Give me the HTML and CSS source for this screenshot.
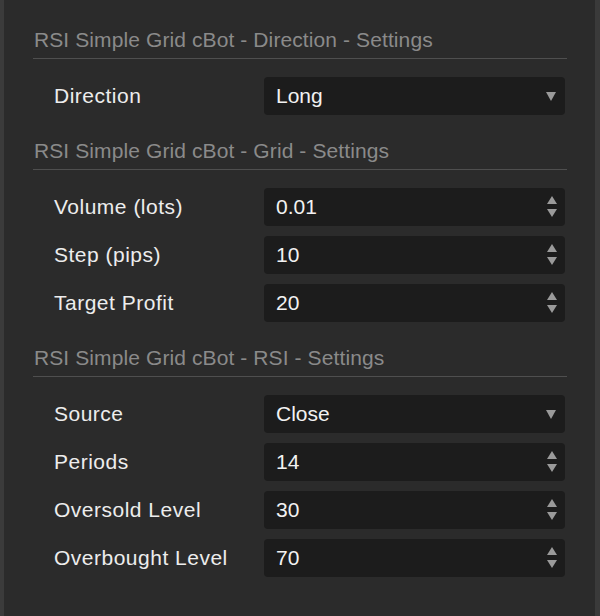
FILE: index.html
```html
<!DOCTYPE html>
<html lang="en">
<head>
    <meta charset="UTF-8">
    <meta name="viewport" content="width=device-width, initial-scale=1.0">
    <title>RSI Simple Grid cBot - Settings</title>
    <link rel="stylesheet" href="styles.css">
</head>
<body>
    <div class="panel">
        <div class="section">
            <div class="section-title">RSI Simple Grid cBot - Direction - Settings</div>
            <div class="rows">
                <div class="row">
                    <span class="label">Direction</span>
                    <div class="field">
                        <span class="value">Long</span>
                        <svg class="drop" width="10" height="9" viewBox="0 0 10 9"><path d="M0 0H10L5 9Z"/></svg>
                    </div>
                </div>
            </div>
        </div>

        <div class="section">
            <div class="section-title">RSI Simple Grid cBot - Grid - Settings</div>
            <div class="rows">
                <div class="row">
                    <span class="label">Volume (lots)</span>
                    <div class="field">
                        <span class="value">0.01</span>
                        <svg class="spin" width="10" height="22" viewBox="0 0 10 22"><path d="M5 0L10 8H0Z"/><path d="M0 13H10L5 21Z"/></svg>
                    </div>
                </div>
                <div class="row">
                    <span class="label">Step (pips)</span>
                    <div class="field">
                        <span class="value">10</span>
                        <svg class="spin" width="10" height="22" viewBox="0 0 10 22"><path d="M5 0L10 8H0Z"/><path d="M0 13H10L5 21Z"/></svg>
                    </div>
                </div>
                <div class="row">
                    <span class="label">Target Profit</span>
                    <div class="field">
                        <span class="value">20</span>
                        <svg class="spin" width="10" height="22" viewBox="0 0 10 22"><path d="M5 0L10 8H0Z"/><path d="M0 13H10L5 21Z"/></svg>
                    </div>
                </div>
            </div>
        </div>

        <div class="section">
            <div class="section-title">RSI Simple Grid cBot - RSI - Settings</div>
            <div class="rows">
                <div class="row">
                    <span class="label">Source</span>
                    <div class="field">
                        <span class="value">Close</span>
                        <svg class="drop" width="10" height="9" viewBox="0 0 10 9"><path d="M0 0H10L5 9Z"/></svg>
                    </div>
                </div>
                <div class="row">
                    <span class="label">Periods</span>
                    <div class="field">
                        <span class="value">14</span>
                        <svg class="spin" width="10" height="22" viewBox="0 0 10 22"><path d="M5 0L10 8H0Z"/><path d="M0 13H10L5 21Z"/></svg>
                    </div>
                </div>
                <div class="row">
                    <span class="label">Oversold Level</span>
                    <div class="field">
                        <span class="value">30</span>
                        <svg class="spin" width="10" height="22" viewBox="0 0 10 22"><path d="M5 0L10 8H0Z"/><path d="M0 13H10L5 21Z"/></svg>
                    </div>
                </div>
                <div class="row">
                    <span class="label">Overbought Level</span>
                    <div class="field">
                        <span class="value">70</span>
                        <svg class="spin" width="10" height="22" viewBox="0 0 10 22"><path d="M5 0L10 8H0Z"/><path d="M0 13H10L5 21Z"/></svg>
                    </div>
                </div>
            </div>
        </div>
    </div>
</body>
</html>
```

FILE: styles.css
```css
body {
    margin: 0;
    background-color: #2b2b2b;
    font-family: 'Liberation Sans', Arial, sans-serif;
}
.panel {
    height: 616px;
    box-sizing: border-box;
    border-left: 4px solid #3b3b3b;
    border-right: 5px solid #3a3a3a;
    padding: 21px 28px 0 29px;
    display: flex;
    flex-direction: column;
    gap: 17px;
}
.section-title {
    height: 37px;
    line-height: 37px;
    padding-left: 1px;
    font-size: 21px;
    letter-spacing: 0.1px;
    color: #8a8a8a;
    border-bottom: 1px solid #4f4f4f;
}
.rows {
    display: flex;
    flex-direction: column;
    gap: 10px;
    padding: 18px 2px 0 21px;
}
.row {
    display: flex;
    align-items: center;
    height: 38px;
}
.label {
    width: 210px;
    font-size: 21px;
    letter-spacing: 0.5px;
    color: #ededed;
}
.field {
    flex: 1;
    height: 38px;
    display: flex;
    align-items: center;
    justify-content: space-between;
    padding: 0 8px 0 12px;
    background-color: #1c1c1c;
    border-radius: 4px;
}
.value {
    font-size: 21px;
    color: #f2f2f2;
}
.field svg {
    fill: #9a9a9a;
}
.drop {
    margin-right: 1px;
}
```
